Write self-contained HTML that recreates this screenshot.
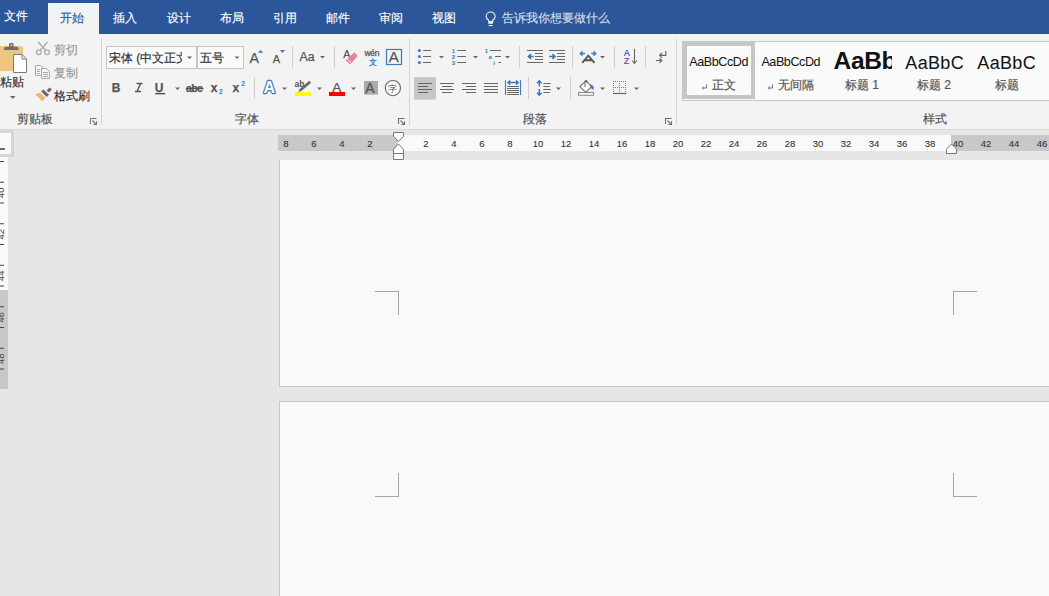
<!DOCTYPE html>
<html><head><meta charset="utf-8">
<style>
*{margin:0;padding:0;box-sizing:border-box}
html,body{width:1049px;height:596px;overflow:hidden;background:#e6e6e6;font-family:"Liberation Sans",sans-serif;color:#444}
.a{position:absolute}
#tabbar{left:0;top:0;width:1049px;height:34px;background:#2b579a}
.tab{position:absolute;top:10px;font-size:12px;line-height:16px;color:#fff;white-space:nowrap;-webkit-text-stroke:0.15px}
#activetab{left:48px;top:3px;width:51px;height:32px;background:#f3f3f3}
#ribbon{left:0;top:34px;width:1049px;height:96px;background:#f3f3f3;border-bottom:1px solid #d9d9d9}
.sep{position:absolute;width:1px;background:#d4d4d4}
.glabel{position:absolute;top:111px;font-size:12px;line-height:16px;color:#555;white-space:nowrap;-webkit-text-stroke:0.2px}
.txt{position:absolute;font-size:12px;line-height:16px;color:#444;white-space:nowrap;-webkit-text-stroke:0.2px}
.launch{position:absolute;width:8px;height:8px}
#hruler{left:278px;top:135px;width:771px;height:16px;background:#f9f9f9}
.rnum{position:absolute;top:137px;font-size:10px;line-height:12px;color:#444;width:20px;text-align:center}
.page{position:absolute;background:#f9f9f9;border:1px solid #c6c6c6}
.crop{position:absolute;border-color:#a6a6a6;border-style:solid;border-width:0}
</style></head><body>
<div id="tabbar" class="a"></div>
<div id="activetab" class="a"></div>
<div class="tab" style="left:4px;top:8px">文件</div>
<div class="tab" style="left:60px;top:10px;color:#2b579a">开始</div>
<div class="tab" style="left:113px">插入</div>
<div class="tab" style="left:167px">设计</div>
<div class="tab" style="left:220px">布局</div>
<div class="tab" style="left:273px">引用</div>
<div class="tab" style="left:326px">邮件</div>
<div class="tab" style="left:379px">审阅</div>
<div class="tab" style="left:432px">视图</div>
<div class="tab" style="left:502px;color:#d5deeb">告诉我你想要做什么</div>

<svg class="a" style="left:0;top:0" width="1049" height="34" viewBox="0 0 1049 34">
 <path d="M488.6,21.5 V20.3 C487,19 486.1,17.8 486.1,16.5 A4.55,4.55 0 1 1 495.2,16.5 C495.2,17.8 494.3,19 492.7,20.3 V21.5 Z" fill="none" stroke="#eef2f8" stroke-width="1.1"/>
 <rect x="488.3" y="22" width="4.7" height="1.8" fill="#eef2f8"/>
 <rect x="488.6" y="25" width="4.2" height="1.1" fill="#eef2f8"/>
</svg>
<div id="ribbon" class="a"></div>
<!-- group separators -->
<div class="sep" style="left:101px;top:39px;height:86px"></div>
<div class="sep" style="left:409px;top:39px;height:86px"></div>
<div class="sep" style="left:676px;top:39px;height:86px"></div>

<div class="glabel" style="left:17px">剪贴板</div>
<!-- clipboard group -->
<svg class="a" style="left:0;top:0" width="1049" height="130" viewBox="0 0 1049 130">
 <!-- paste -->
 <path d="M0,46 H20 Q23,46 23,49 V71 H0 Z" fill="#eec47e"/>
 <path d="M4,50 Q4,46.8 6,46.8 H9 V44 Q9,43 10,43 H12.5 Q13.5,43 13.5,44 V46.8 H16.5 Q18.5,46.8 18.5,50 Z" fill="#6e6e6e"/>
 <rect x="10.5" y="44.5" width="1.5" height="1.2" fill="#f3f3f3"/>
 <path d="M13.5,54.5 H22 L26.5,59 V72.5 H13.5 Z" fill="#fdfdfd" stroke="#7a7a7a" stroke-width="1"/>
 <path d="M22,54.5 V59 H26.5" fill="none" stroke="#7a7a7a" stroke-width="1"/>
 <path d="M10,96 H15.5 L12.75,99 Z" fill="#666"/>
 <!-- scissors -->
 <g stroke="#ababab" stroke-width="1.3" fill="none">
  <circle cx="38.8" cy="52.3" r="2.4"/>
  <circle cx="47" cy="52.3" r="2.4"/>
  <path d="M40.3,50.3 L47.5,42"/>
  <path d="M45.5,50.3 L38.3,42"/>
 </g>
 <!-- copy -->
 <g stroke="#a8a8a8" stroke-width="1" fill="#f7f7f7">
  <path d="M35.5,65.5 H40.5 L43.5,68.5 V75.5 H35.5 Z"/>
  <path d="M41.5,68.5 H46.5 L49.5,71.5 V78.5 H41.5 Z"/>
 </g>
 <g stroke="#a8a8a8" stroke-width="1">
  <path d="M37,69.5 H40 M37,71.5 H40 M37,73.5 H40"/>
  <path d="M43,72.5 H48 M43,74.5 H48 M43,76.5 H48"/>
 </g>
 <!-- format painter -->
 <path d="M35.2,94.4 L39.9,92.6 L45.6,98.1 L41.9,101.6 L40.6,99.6 Z" fill="#eabd6c"/>
 <path d="M41.1,91.4 L43.4,89.6 L49,94.7 L46.9,96.9 Z" fill="#666"/>
 <path d="M46.6,90.4 L49.7,87.4 L51.9,89.5 L48.8,92.5 Z" fill="#666"/>
 <path d="M90.5,124 V118.5 H96.5" fill="none" stroke="#707070" stroke-width="1"/>
 <path d="M92.5,120.5 L96.3,124.3 M96.5,121.3 V124.5 H93.3" fill="none" stroke="#707070" stroke-width="1.1"/>
</svg>
<div class="txt" style="left:0;top:74px;color:#333">粘贴</div>
<div class="txt" style="left:54px;top:42px;color:#9c9c9c">剪切</div>
<div class="txt" style="left:54px;top:65px;color:#9c9c9c">复制</div>
<div class="txt" style="left:54px;top:88px;color:#333">格式刷</div>

<div class="glabel" style="left:235px">字体</div>
<!-- font group -->
<div class="a" style="left:106px;top:46px;width:91px;height:23px;background:#fafafa;border:1px solid #c6c6c6"></div>
<div class="a" style="left:197px;top:46px;width:47px;height:23px;background:#fafafa;border:1px solid #c6c6c6"></div>
<div class="a" style="left:109px;top:50px;width:73px;height:16px;overflow:hidden;font-size:12px;line-height:16px;color:#333;white-space:nowrap;-webkit-text-stroke:0.2px">宋体 (中文正文)</div>
<div class="txt" style="left:200px;top:50px;color:#333">五号</div>
<svg class="a" style="left:0;top:0" width="1049" height="130" viewBox="0 0 1049 130">
 <g fill="#666">
  <path d="M187,56.5 H192 L189.5,59 Z"/>
  <path d="M234.5,56.5 H239.5 L237,59 Z"/>
  <path d="M320,56 H325 L322.5,58.5 Z"/>
  <path d="M175,87.5 H180 L177.5,90 Z"/>
  <path d="M282,87.5 H287 L284.5,90 Z"/>
  <path d="M317,87.5 H322 L319.5,90 Z"/>
  <path d="M351,87.5 H356 L353.5,90 Z"/>
 </g>
 <g fill="#cfcfcf">
  <rect x="292" y="46" width="1" height="22"/>
  <rect x="334" y="46" width="1" height="22"/>
  <rect x="254" y="77" width="1" height="22"/>
 </g>
 <g font-family="Liberation Sans, sans-serif" fill="#555" stroke="#555" stroke-width="0.25">
  <text x="249.5" y="63" font-size="14.2">A</text>
  <text x="272.8" y="63" font-size="11">A</text>
  <text x="299.5" y="61" font-size="12.3">Aa</text>
  <text x="111.8" y="92" font-size="12" font-weight="bold">B</text>
  <text x="154.8" y="92" font-size="12" font-weight="bold">U</text>
  <rect x="155.5" y="93" width="9.5" height="1.2"/>
  <text x="186" y="92" font-size="10.5" font-weight="bold" letter-spacing="-0.6">abc</text>
  <rect x="186" y="88" width="17.5" height="1"/>
  <text x="210.8" y="92" font-size="12" font-weight="bold">x</text>
  <text x="232.5" y="92" font-size="12" font-weight="bold">x</text>
  <text x="343.3" y="58.3" font-size="10.8">A</text>
  <text x="364.5" y="56" font-size="8.5" letter-spacing="-0.3">wén</text>
  <text x="388.8" y="62" font-size="15">A</text>
  <text x="332.2" y="92" font-size="13.5">A</text>
 </g>
 <path d="M136.5,83.5 H142.5 M135,91.5 H141 M140.5,83.5 L137,91.5" stroke="#555" stroke-width="1.4" fill="none"/>
 <g font-family="Liberation Sans, sans-serif" fill="#3a78c2" font-weight="bold">
  <text x="219" y="93.6" font-size="6.5">2</text>
  <text x="241.3" y="86" font-size="6.5">2</text>
 </g>
 <path d="M258,52.8 L260.6,50 L263.2,52.8 Z" fill="#3a78c2"/>
 <path d="M280,50 L285,50 L282.5,53 Z" fill="#3a78c2"/>
 <!-- eraser -->
 <path d="M345.6,60.3 L354.4,52.3 L357.8,56.1 L350.2,64.5 Z" fill="#e6849a"/>
 <path d="M347,58.9 L351.5,63.2" stroke="#f3f3f3" stroke-width="0.9"/>
 <text x="368.5" y="65" font-size="8" fill="#3a78c2" font-weight="bold">文</text>
 <rect x="386.5" y="49.5" width="15" height="15" fill="none" stroke="#3a78c2" stroke-width="1.2"/>
 <!-- text effect A -->
 <text x="263.6" y="93.2" font-family="Liberation Sans, sans-serif" font-size="16" font-weight="bold" fill="#fdfdfd" stroke="#3f7ac4" stroke-width="2.4" paint-order="stroke" stroke-linejoin="round">A</text>
 <!-- highlighter -->
 <text x="294.5" y="86.8" font-family="Liberation Sans, sans-serif" font-size="8.5" font-weight="bold" fill="#555">ab</text>
 <path d="M300,90.5 L310.2,81.8" stroke="#6a6a6a" stroke-width="2.8"/><path d="M298.8,91.6 L300.5,90" stroke="#6a6a6a" stroke-width="1.2"/>
 <rect x="295" y="92" width="16" height="4" fill="#ffff00"/>
 <rect x="329" y="92" width="16" height="4" fill="#ff0000"/>
 <rect x="364" y="81" width="14" height="13.6" fill="#ababab"/>
 <text x="365.3" y="92.7" font-family="Liberation Sans, sans-serif" font-size="14" fill="#555" stroke="#555" stroke-width="0.3">A</text>
 <circle cx="392.9" cy="88.1" r="7.6" fill="#fbfbfb" stroke="#666" stroke-width="1.1"/>
 <text x="388.3" y="92" font-size="9" fill="#555">字</text>
 <path d="M398.5,124 V118.5 H404.5 M400.5,120.5 L404.3,124.3 M404.5,121.3 V124.5 H401.3" fill="none" stroke="#707070" stroke-width="1.1"/>
</svg>

<div class="glabel" style="left:523px">段落</div>
<!-- paragraph group -->
<svg class="a" style="left:0;top:0" width="1049" height="130" viewBox="0 0 1049 130">
 <g fill="#666">
  <path d="M439,56 H444 L441.5,58.5 Z"/>
  <path d="M473,56 H478 L475.5,58.5 Z"/>
  <path d="M505,56 H510 L507.5,58.5 Z"/>
  <path d="M600,56 H605 L602.5,58.5 Z"/>
  <path d="M556,87.5 H561 L558.5,90 Z"/>
  <path d="M600,87.5 H605 L602.5,90 Z"/>
  <path d="M634,87.5 H639 L636.5,90 Z"/>
 </g>
 <g fill="#cfcfcf">
  <rect x="519" y="46" width="1" height="22"/>
  <rect x="572" y="46" width="1" height="22"/>
  <rect x="614" y="46" width="1" height="22"/>
  <rect x="645" y="46" width="1" height="22"/>
  <rect x="528" y="77" width="1" height="22"/>
  <rect x="570" y="77" width="1" height="22"/>
 </g>
 <!-- bullets -->
 <g fill="#3a78c2">
  <circle cx="419.4" cy="50.5" r="1.5"/><circle cx="419.4" cy="56.4" r="1.5"/><circle cx="419.4" cy="62.4" r="1.5"/>
 </g>
 <g stroke="#666" stroke-width="1.1">
  <path d="M423,50.5 H431 M423,56.5 H431 M423,62.5 H431"/>
  <path d="M457.3,50.5 H466 M457.3,56.5 H466 M457.3,62.5 H466"/>
  <path d="M490,50.5 H501 M495,56.5 H501 M498.3,62.5 H501"/>
 </g>
 <g font-family="Liberation Sans, sans-serif" font-size="6" font-weight="bold" fill="#3a78c2">
  <text x="451.8" y="53">1</text><text x="451.8" y="59">2</text><text x="451.8" y="65">3</text>
  <text x="484.8" y="53">1</text><text x="488.6" y="59">a</text><text x="493.3" y="65">i</text>
 </g>
 <!-- indents -->
 <g stroke="#666" stroke-width="1.1">
  <path d="M527,50.5 H543 M535,53.5 H543 M535,56.5 H543 M535,59.5 H543 M527,62.5 H543"/>
  <path d="M549,50.5 H565 M557,53.5 H565 M557,56.5 H565 M557,59.5 H565 M549,62.5 H565"/>
 </g>
 <g fill="none" stroke="#3a78c2" stroke-width="1.7">
  <path d="M533.6,56.5 H528.8 M531,54.1 L528.5,56.5 L531,58.9"/>
  <path d="M549.2,56.5 H554.8 M552.4,54.1 L554.9,56.5 L552.4,58.9"/>
 </g>
 <!-- chinese layout -->
 <path d="M582.2,62.8 L588.3,55.6 L594.5,62.8 M584.5,60.2 H592.2" fill="none" stroke="#555" stroke-width="1.9"/>
 <g fill="none" stroke="#3a78c2" stroke-width="1.3">
  <path d="M580.5,53.5 H585 M582.5,51.3 L580.3,53.5 L582.5,55.7"/>
  <path d="M591.3,53.5 H595.8 M593.5,51.3 L595.8,53.5 L593.5,55.7"/>
 </g>
 <!-- sort -->
 <text x="623.5" y="56" font-family="Liberation Sans, sans-serif" font-size="9.2" font-weight="bold" fill="#3a78c2">A</text>
 <text x="623.8" y="64.2" font-family="Liberation Sans, sans-serif" font-size="9.2" font-weight="bold" fill="#8b4db8">Z</text>
 <path d="M634.5,49 V63.5 M632,60.5 L634.5,63.5 L637,60.5" fill="none" stroke="#666" stroke-width="1.1"/>
 <!-- show marks -->
 <path d="M665.8,51 V55.3 H659.8 M662,53 L659.6,55.3 L662,57.6" fill="none" stroke="#666" stroke-width="1.15"/>
 <path d="M656,60.5 H661.8 M659.5,58.2 L661.8,60.5 L659.5,62.8" fill="none" stroke="#666" stroke-width="1.15"/>
 <!-- align row -->
 <rect x="414" y="77.2" width="22" height="22.4" fill="#c6c6c6"/>
 <g stroke="#666" stroke-width="1.1">
  <path d="M418,83.5 H432 M418,86.5 H428 M418,89.5 H432 M418,92.5 H428"/>
  <path d="M440,83.5 H454 M442,86.5 H452 M440,89.5 H454 M442,92.5 H452"/>
  <path d="M462,83.5 H476 M466,86.5 H476 M462,89.5 H476 M466,92.5 H476"/>
  <path d="M484,83.5 H498 M484,86.5 H498 M484,89.5 H498 M484,92.5 H498"/>
  <path d="M507.2,86.5 H519 M507.2,88.5 H519 M507.2,90.5 H519 M507.2,92.5 H519 M507.2,94.5 H519"/>
  <path d="M543.3,83.5 H550.8 M543.3,86.5 H549.8 M543.3,89.5 H550.8 M543.3,92.5 H549.8"/>
 </g>
 <g fill="none" stroke="#3a78c2" stroke-width="1.1">
  <path d="M505.5,80.3 V95 M520.5,80.3 V95"/>
 </g>
 <g fill="none" stroke="#3a78c2" stroke-width="1.5">
  <path d="M508,82.6 H518.2 M510.2,80.5 L508,82.6 L510.2,84.7 M516,80.5 L518.2,82.6 L516,84.7"/>
  <path d="M539.3,81 V86.6 M539.3,89 V95 M537,83.2 L539.3,80.9 L541.6,83.2 M537,92.8 L539.3,95.1 L541.6,92.8"/>
 </g>
 <!-- shading -->
 <path d="M579.8,86.6 L585.8,80.9 L591.8,86.6 L585.8,92.3 Z" fill="#fdfdfd" stroke="#666" stroke-width="1.1"/>
 <path d="M585,87 V81.2 Q585,80.3 586,80.3 Q587,80.3 587,81.2 V83" fill="none" stroke="#666" stroke-width="1"/>
 <path d="M590.5,84.5 Q594.5,85 593.5,90 Q592,88.5 590.5,88 Z" fill="#3a78c2"/>
 <rect x="578.5" y="92.6" width="15" height="2.6" fill="#fdfdfd" stroke="#777" stroke-width="0.9"/>
 <!-- borders -->
 <g fill="#777">
  <path d="M613,81 h1v1h-1z"/>
 </g>
 <g stroke="#777" stroke-width="1" stroke-dasharray="1 1">
  <path d="M613.5,81 V93 M619.5,81 V93 M625.5,81 V93 M613,81.5 H626 M613,87.5 H626"/>
 </g>
 <path d="M613,93.5 H626.5" stroke="#666" stroke-width="1.2"/>
 <path d="M665.5,124 V118.5 H671.5 M667.5,120.5 L671.3,124.3 M671.5,121.3 V124.5 H668.3" fill="none" stroke="#707070" stroke-width="1.1"/>
</svg>

<div class="glabel" style="left:923px">样式</div>
<!-- styles group -->
<div class="a" style="left:682px;top:41px;width:380px;height:60px;background:#fafafa;border:1px solid #c6c6c6;border-right:none"></div>
<div class="a" style="left:683px;top:42px;width:72px;height:57px;border:4px solid #c6c6c6;background:#fafafa"></div>
<svg class="a" style="left:0;top:0" width="1049" height="130" viewBox="0 0 1049 130">
 <g font-family="Liberation Sans, sans-serif" fill="#111">
  <text x="689.3" y="66" font-size="12.6" letter-spacing="-0.45">AaBbCcDd</text>
  <text x="761.4" y="66" font-size="12.6" letter-spacing="-0.45">AaBbCcDd</text>
  <text x="833.5" y="69.3" font-size="24.5" font-weight="bold" letter-spacing="-0.3">AaBb</text>
  <text x="905.3" y="68.8" font-size="18" letter-spacing="0.35">AaBbC</text>
  <text x="977.3" y="68.8" font-size="18" letter-spacing="0.35">AaBbC</text>
 </g>
 <g fill="none" stroke="#666" stroke-width="0.9">
  <path d="M706.5,84.5 V88 H702.5 M703.8,86.7 L702.3,88 L703.8,89.3"/>
  <path d="M772.5,84.5 V88 H768.5 M769.8,86.7 L768.3,88 L769.8,89.3"/>
 </g>
</svg>
<div class="a" style="left:892px;top:44px;width:4px;height:30px;background:#fafafa"></div>
<div class="txt" style="left:712px;top:77px;color:#555">正文</div>
<div class="txt" style="left:778px;top:77px;color:#555">无间隔</div>
<div class="txt" style="left:845px;top:77px;color:#555">标题 1</div>
<div class="txt" style="left:917px;top:77px;color:#555">标题 2</div>
<div class="txt" style="left:995px;top:77px;color:#555">标题</div>


<!-- canvas pieces -->
<div id="hruler" class="a"></div>
<div class="a" style="left:278px;top:135px;width:120px;height:16px;background:#c8c8c8"></div>
<div class="a" style="left:951px;top:135px;width:98px;height:16px;background:#c8c8c8"></div>

<svg class="a" style="left:0;top:0" width="1049" height="596" viewBox="0 0 1049 596">
 <g font-family="Liberation Sans, sans-serif" font-size="9.5" fill="#333" stroke="#333" stroke-width="0.1" text-anchor="middle">
  <text x="286" y="147">8</text>
  <text x="314" y="147">6</text>
  <text x="342" y="147">4</text>
  <text x="370" y="147">2</text>
  <text x="426" y="147">2</text>
  <text x="454" y="147">4</text>
  <text x="482" y="147">6</text>
  <text x="510" y="147">8</text>
  <text x="538" y="147">10</text>
  <text x="566" y="147">12</text>
  <text x="594" y="147">14</text>
  <text x="622" y="147">16</text>
  <text x="650" y="147">18</text>
  <text x="678" y="147">20</text>
  <text x="706" y="147">22</text>
  <text x="734" y="147">24</text>
  <text x="762" y="147">26</text>
  <text x="790" y="147">28</text>
  <text x="818" y="147">30</text>
  <text x="846" y="147">32</text>
  <text x="874" y="147">34</text>
  <text x="902" y="147">36</text>
  <text x="930" y="147">38</text>
  <text x="958" y="147">40</text>
  <text x="986" y="147">42</text>
  <text x="1014" y="147">44</text>
  <text x="1042" y="147">46</text>
 </g>
 <path d="M393.5,132.5 H403.5 V136.5 L398.5,141.3 L393.5,136.5 Z" fill="#fdfdfd" stroke="#777" stroke-width="1"/>
 <path d="M398.5,144 L403.5,149.3 V159.5 H393.5 V149.3 Z" fill="#fdfdfd" stroke="#777" stroke-width="1"/>
 <path d="M393.5,153.5 H403.5" stroke="#777" stroke-width="1"/>
 <path d="M946.5,153.5 V149.2 L951.5,144 L956.5,149.2 V153.5 Z" fill="#fdfdfd" stroke="#777" stroke-width="1"/>
</svg>
<div class="page" style="left:279px;top:160px;width:800px;height:227px;border-top:none"></div>
<div class="page" style="left:279px;top:401px;width:800px;height:300px"></div>

<div class="crop" style="left:375px;top:291px;width:24px;height:24px;border-top-width:1px;border-right-width:1px"></div>
<div class="crop" style="left:953px;top:291px;width:24px;height:24px;border-top-width:1px;border-left-width:1px"></div>
<div class="crop" style="left:375px;top:473px;width:24px;height:24px;border-bottom-width:1px;border-right-width:1px"></div>
<div class="crop" style="left:953px;top:473px;width:24px;height:24px;border-bottom-width:1px;border-left-width:1px"></div>

<!-- vertical ruler -->
<div class="a" style="left:0;top:130px;width:14px;height:27px;background:#d6d6d6"></div>
<div class="a" style="left:0;top:133px;width:11px;height:21px;background:#f9f9f9"></div>
<div class="a" style="left:0;top:148px;width:5px;height:2px;background:#707070"></div>
<div class="a" style="left:0;top:157px;width:8px;height:133px;background:#f9f9f9"></div>
<div class="a" style="left:0;top:290px;width:8px;height:99px;background:#c8c8c8"></div>

<svg class="a" style="left:0;top:0" width="20" height="596" viewBox="0 0 20 596">
 <rect x="0" y="161.00" width="4" height="1" fill="#444"/>
 <rect x="0" y="181.75" width="4" height="1" fill="#444"/>
 <rect x="0" y="202.50" width="4" height="1" fill="#444"/>
 <rect x="0" y="223.25" width="4" height="1" fill="#444"/>
 <rect x="0" y="244.00" width="4" height="1" fill="#444"/>
 <rect x="0" y="264.75" width="4" height="1" fill="#444"/>
 <rect x="0" y="285.50" width="4" height="1" fill="#444"/>
 <rect x="0" y="306.25" width="4" height="1" fill="#444"/>
 <rect x="0" y="327.00" width="4" height="1" fill="#444"/>
 <rect x="0" y="347.75" width="4" height="1" fill="#444"/>
 <rect x="0" y="368.50" width="4" height="1" fill="#444"/>
 <g font-family="Liberation Sans, sans-serif" font-size="9.5" fill="#444" text-anchor="middle">
  <text transform="translate(3.9,192.65) rotate(-90)" x="0" y="0">40</text>
  <text transform="translate(3.9,234.15) rotate(-90)" x="0" y="0">42</text>
  <text transform="translate(3.9,275.65) rotate(-90)" x="0" y="0">44</text>
  <text transform="translate(3.9,317.15) rotate(-90)" x="0" y="0">46</text>
  <text transform="translate(3.9,358.65) rotate(-90)" x="0" y="0">48</text>
 </g></svg>
</body></html>
